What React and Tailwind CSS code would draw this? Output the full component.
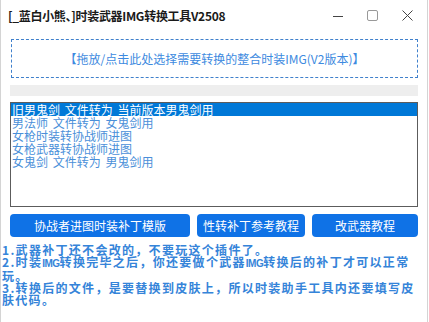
import React, { useState } from "react";

const items = [
  "旧男鬼剑 文件转为 当前版本男鬼剑用",
  "男法师 文件转为 女鬼剑用",
  "女枪时装转协战师进图",
  "女枪武器转协战师进图",
  "女鬼剑 文件转为 男鬼剑用",
];

const font = "font-['Microsoft_YaHei','Noto_Sans_CJK_SC',sans-serif]";

function Img() {
  return <span className="text-[10px] tracking-[-0.5px] font-['Liberation_Sans',sans-serif]">IMG</span>;
}

function App() {
  const [selected, setSelected] = useState(0);

  return (
    <div className={`w-[429px] h-[322px] bg-white ${font}`}>
      <div className="w-[428px] h-[322px] border-x border-[#d4d4d4] flex flex-col">
        {/* title bar */}
        <div className="h-[31px] flex items-center pl-[7px] shrink-0">
          <span className="text-[12px] font-bold text-[#1a1a1a] tracking-[-0.3px]">
            [_蓝白小熊、]时装武器IMG转换工具V2508
          </span>
          <div className="ml-auto flex items-center h-full">
            <div className="w-[35px] h-full flex items-center justify-center">
              <svg width="10" height="10" viewBox="0 0 10 10">
                <path d="M0 5.5h10" stroke="#444" strokeWidth="1" />
              </svg>
            </div>
            <div className="w-[35px] h-full flex items-center justify-center">
              <svg width="11" height="11" viewBox="0 0 11 11">
                <rect x="0.5" y="0.5" width="10" height="10" rx="1.5" fill="none" stroke="#999" strokeWidth="1" />
              </svg>
            </div>
            <div className="w-[35px] h-full flex items-center justify-center mr-[2px]">
              <svg width="11" height="11" viewBox="0 0 11 11">
                <path d="M0.5 0.5l10 10M10.5 0.5l-10 10" stroke="#444" strokeWidth="1" />
              </svg>
            </div>
          </div>
        </div>

        <div className="pl-[9px] w-[417px] flex flex-col">
          {/* drop zone */}
          <div className="mt-[8px] ml-[1px] h-[39px] border border-dashed border-[#3f80cc] flex items-center justify-center text-[12px] text-[#3d8ae0]">
            【拖放/点击此处选择需要转换的整合时装IMG(V2版本)】
          </div>

          {/* progress */}
          <div className="mt-[7px] h-[11px] bg-[#eeeeee]" />

          {/* list */}
          <div className="mt-[6px] h-[105px] border border-[#5c5c5c] bg-white">
            {items.map((it, i) => (
              <div
                key={i}
                onClick={() => setSelected(i)}
                className={`h-[13px] leading-[13px] text-[12px] pl-[1px] whitespace-nowrap [word-spacing:2px] ${
                  selected === i ? "bg-[#0078d7] text-white" : "text-[#4a8fd9]"
                }`}
              >
                {it}
              </div>
            ))}
          </div>

          {/* buttons */}
          <div className="mt-[7px] flex gap-[7px]">
            <button className="w-[180px] h-[23px] rounded-[4px] bg-[#0f72e6] text-white text-[12px]">
              协战者进图时装补丁模版
            </button>
            <button className="w-[108px] h-[23px] rounded-[4px] bg-[#0f72e6] text-white text-[12px]">
              性转补丁参考教程
            </button>
            <button className="w-[106px] h-[23px] rounded-[4px] bg-[#0f72e6] text-white text-[12px]">
              改武器教程
            </button>
          </div>
        </div>

        {/* notes */}
        <div className="mt-[7px] pl-[1px] text-[12px] leading-[12px] tracking-[1.3px] font-bold text-[#3584d9] whitespace-nowrap">
          <div>1.武器补丁还不会改的，不要玩这个插件了。</div>
          <div>
            2.时装<Img />转换完毕之后，你还要做个武器<Img />转换后的补丁才可以正常
            <br />
            玩。
          </div>
          <div>
            3.转换后的文件，是要替换到皮肤上，所以时装助手工具内还要填写皮
            <br />
            肤代码。
          </div>
        </div>
      </div>
    </div>
  );
}

export default App;
